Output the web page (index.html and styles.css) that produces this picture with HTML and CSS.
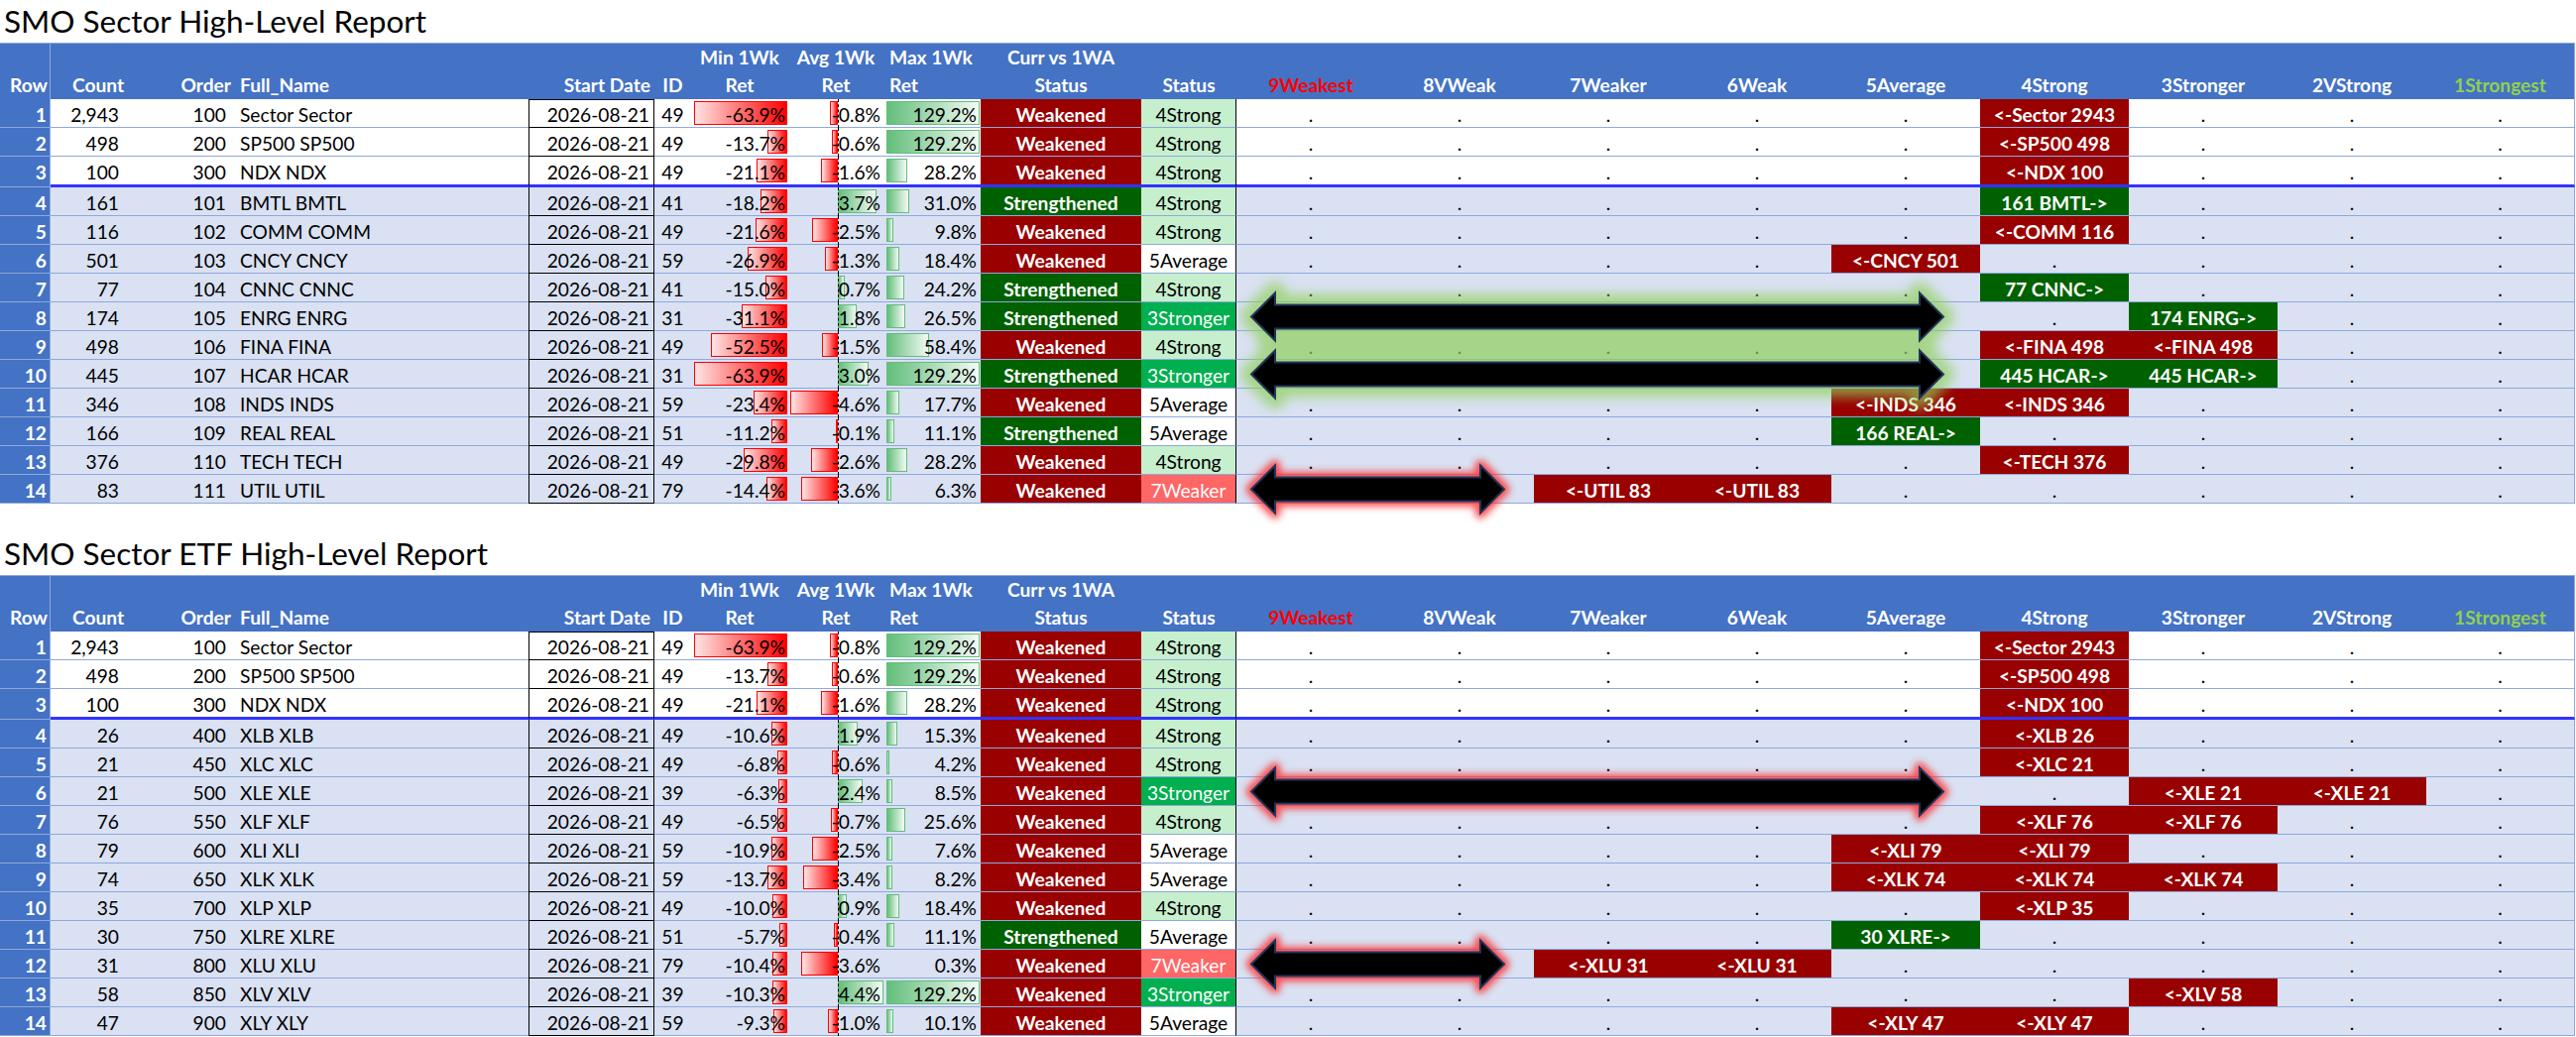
FILE: index.html
```html
<!DOCTYPE html>
<html lang="en">
<head>
<meta charset="utf-8">
<title>SMO Sector High-Level Report</title>
<link rel="stylesheet" href="styles.css">
</head>
<body>
<main class="page">

<section class="report">
<h1 class="title">SMO Sector High-Level Report</h1>
<div class="sheet">
<div class="row head">
<div class="c rn"><span>Row</span></div><div class="c cnt"><span>Count</span></div><div class="c ord"><span>Order</span></div><div class="c nm"><span>Full_Name</span></div><div class="c dt"><span>Start Date</span></div><div class="c id"><span>ID</span></div>
<div class="c mn"><span>Min 1Wk</span><span>Ret</span></div><div class="c av"><span>Avg 1Wk</span><span>Ret</span></div><div class="c mx"><span>Max 1Wk</span><span>Ret</span></div>
<div class="c s1"><span>Curr vs 1WA</span><span>Status</span></div><div class="c s2"><span>Status</span></div>
<div class="c g"><span class="weak9">9Weakest</span></div><div class="c g"><span>8VWeak</span></div><div class="c g"><span>7Weaker</span></div><div class="c g"><span>6Weak</span></div><div class="c g"><span>5Average</span></div><div class="c g"><span>4Strong</span></div><div class="c g"><span>3Stronger</span></div><div class="c g"><span>2VStrong</span></div><div class="c g"><span class="strong1">1Strongest</span></div>
</div>

<div class="row r first">
<div class="c rn">1</div><div class="c cnt">2,943</div><div class="c ord">100</div><div class="c nm">Sector Sector</div><div class="c dt">2026-08-21</div><div class="c id">49</div>
<div class="c mn"><i class="bar" style="width:94px"></i><span class="v">-63.9%</span></div>
<div class="c av"><i class="bar neg" style="width:8.3px"></i><span class="v">-0.8%</span></div>
<div class="c mx"><i class="bar pos" style="width:94px"></i><span class="v">129.2%</span></div>
<div class="c s1 wk">Weakened</div><div class="c s2 k4">4Strong</div>
<div class="c g">.</div><div class="c g">.</div><div class="c g">.</div><div class="c g">.</div><div class="c g">.</div><div class="c g fr">&lt;-Sector 2943</div><div class="c g">.</div><div class="c g">.</div><div class="c g">.</div>
</div>

<div class="row r">
<div class="c rn">2</div><div class="c cnt">498</div><div class="c ord">200</div><div class="c nm">SP500 SP500</div><div class="c dt">2026-08-21</div><div class="c id">49</div>
<div class="c mn"><i class="bar" style="width:20.2px"></i><span class="v">-13.7%</span></div>
<div class="c av"><i class="bar neg" style="width:6.2px"></i><span class="v">-0.6%</span></div>
<div class="c mx"><i class="bar pos" style="width:94px"></i><span class="v">129.2%</span></div>
<div class="c s1 wk">Weakened</div><div class="c s2 k4">4Strong</div>
<div class="c g">.</div><div class="c g">.</div><div class="c g">.</div><div class="c g">.</div><div class="c g">.</div><div class="c g fr">&lt;-SP500 498</div><div class="c g">.</div><div class="c g">.</div><div class="c g">.</div>
</div>

<div class="row r sep">
<div class="c rn">3</div><div class="c cnt">100</div><div class="c ord">300</div><div class="c nm">NDX NDX</div><div class="c dt">2026-08-21</div><div class="c id">49</div>
<div class="c mn"><i class="bar" style="width:31px"></i><span class="v">-21.1%</span></div>
<div class="c av"><i class="bar neg" style="width:16.6px"></i><span class="v">-1.6%</span></div>
<div class="c mx"><i class="bar pos" style="width:20.5px"></i><span class="v">28.2%</span></div>
<div class="c s1 wk">Weakened</div><div class="c s2 k4">4Strong</div>
<div class="c g">.</div><div class="c g">.</div><div class="c g">.</div><div class="c g">.</div><div class="c g">.</div><div class="c g fr">&lt;-NDX 100</div><div class="c g">.</div><div class="c g">.</div><div class="c g">.</div>
</div>

<div class="row r alt">
<div class="c rn">4</div><div class="c cnt">161</div><div class="c ord">101</div><div class="c nm">BMTL BMTL</div><div class="c dt">2026-08-21</div><div class="c id">41</div>
<div class="c mn"><i class="bar" style="width:26.8px"></i><span class="v">-18.2%</span></div>
<div class="c av"><i class="bar pos" style="width:38.5px"></i><span class="v">3.7%</span></div>
<div class="c mx"><i class="bar pos" style="width:22.6px"></i><span class="v">31.0%</span></div>
<div class="c s1 sg">Strengthened</div><div class="c s2 k4">4Strong</div>
<div class="c g">.</div><div class="c g">.</div><div class="c g">.</div><div class="c g">.</div><div class="c g">.</div><div class="c g fg">161 BMTL-&gt;</div><div class="c g">.</div><div class="c g">.</div><div class="c g">.</div>
</div>

<div class="row r alt">
<div class="c rn">5</div><div class="c cnt">116</div><div class="c ord">102</div><div class="c nm">COMM COMM</div><div class="c dt">2026-08-21</div><div class="c id">49</div>
<div class="c mn"><i class="bar" style="width:31.8px"></i><span class="v">-21.6%</span></div>
<div class="c av"><i class="bar neg" style="width:26px"></i><span class="v">-2.5%</span></div>
<div class="c mx"><i class="bar pos" style="width:7.1px"></i><span class="v">9.8%</span></div>
<div class="c s1 wk">Weakened</div><div class="c s2 k4">4Strong</div>
<div class="c g">.</div><div class="c g">.</div><div class="c g">.</div><div class="c g">.</div><div class="c g">.</div><div class="c g fr">&lt;-COMM 116</div><div class="c g">.</div><div class="c g">.</div><div class="c g">.</div>
</div>

<div class="row r alt">
<div class="c rn">6</div><div class="c cnt">501</div><div class="c ord">103</div><div class="c nm">CNCY CNCY</div><div class="c dt">2026-08-21</div><div class="c id">59</div>
<div class="c mn"><i class="bar" style="width:39.6px"></i><span class="v">-26.9%</span></div>
<div class="c av"><i class="bar neg" style="width:13.5px"></i><span class="v">-1.3%</span></div>
<div class="c mx"><i class="bar pos" style="width:13.4px"></i><span class="v">18.4%</span></div>
<div class="c s1 wk">Weakened</div><div class="c s2 k5">5Average</div>
<div class="c g">.</div><div class="c g">.</div><div class="c g">.</div><div class="c g">.</div><div class="c g fr">&lt;-CNCY 501</div><div class="c g">.</div><div class="c g">.</div><div class="c g">.</div><div class="c g">.</div>
</div>

<div class="row r alt">
<div class="c rn">7</div><div class="c cnt">77</div><div class="c ord">104</div><div class="c nm">CNNC CNNC</div><div class="c dt">2026-08-21</div><div class="c id">41</div>
<div class="c mn"><i class="bar" style="width:22.1px"></i><span class="v">-15.0%</span></div>
<div class="c av"><i class="bar pos" style="width:7.3px"></i><span class="v">0.7%</span></div>
<div class="c mx"><i class="bar pos" style="width:17.6px"></i><span class="v">24.2%</span></div>
<div class="c s1 sg">Strengthened</div><div class="c s2 k4">4Strong</div>
<div class="c g">.</div><div class="c g">.</div><div class="c g">.</div><div class="c g">.</div><div class="c g">.</div><div class="c g fg">77 CNNC-&gt;</div><div class="c g">.</div><div class="c g">.</div><div class="c g">.</div>
</div>

<div class="row r alt">
<div class="c rn">8</div><div class="c cnt">174</div><div class="c ord">105</div><div class="c nm">ENRG ENRG</div><div class="c dt">2026-08-21</div><div class="c id">31</div>
<div class="c mn"><i class="bar" style="width:45.7px"></i><span class="v">-31.1%</span></div>
<div class="c av"><i class="bar pos" style="width:18.7px"></i><span class="v">1.8%</span></div>
<div class="c mx"><i class="bar pos" style="width:19.3px"></i><span class="v">26.5%</span></div>
<div class="c s1 sg">Strengthened</div><div class="c s2 k3">3Stronger</div>
<div class="c g">.</div><div class="c g">.</div><div class="c g">.</div><div class="c g">.</div><div class="c g">.</div><div class="c g">.</div><div class="c g fg">174 ENRG-&gt;</div><div class="c g">.</div><div class="c g">.</div>
</div>

<div class="row r alt">
<div class="c rn">9</div><div class="c cnt">498</div><div class="c ord">106</div><div class="c nm">FINA FINA</div><div class="c dt">2026-08-21</div><div class="c id">49</div>
<div class="c mn"><i class="bar" style="width:77.2px"></i><span class="v">-52.5%</span></div>
<div class="c av"><i class="bar neg" style="width:15.6px"></i><span class="v">-1.5%</span></div>
<div class="c mx"><i class="bar pos" style="width:42.5px"></i><span class="v">58.4%</span></div>
<div class="c s1 wk">Weakened</div><div class="c s2 k4">4Strong</div>
<div class="c g">.</div><div class="c g">.</div><div class="c g">.</div><div class="c g">.</div><div class="c g">.</div><div class="c g fr">&lt;-FINA 498</div><div class="c g fr">&lt;-FINA 498</div><div class="c g">.</div><div class="c g">.</div>
</div>

<div class="row r alt">
<div class="c rn">10</div><div class="c cnt">445</div><div class="c ord">107</div><div class="c nm">HCAR HCAR</div><div class="c dt">2026-08-21</div><div class="c id">31</div>
<div class="c mn"><i class="bar" style="width:94px"></i><span class="v">-63.9%</span></div>
<div class="c av"><i class="bar pos" style="width:31.2px"></i><span class="v">3.0%</span></div>
<div class="c mx"><i class="bar pos" style="width:94px"></i><span class="v">129.2%</span></div>
<div class="c s1 sg">Strengthened</div><div class="c s2 k3">3Stronger</div>
<div class="c g">.</div><div class="c g">.</div><div class="c g">.</div><div class="c g">.</div><div class="c g">.</div><div class="c g fg">445 HCAR-&gt;</div><div class="c g fg">445 HCAR-&gt;</div><div class="c g">.</div><div class="c g">.</div>
</div>

<div class="row r alt">
<div class="c rn">11</div><div class="c cnt">346</div><div class="c ord">108</div><div class="c nm">INDS INDS</div><div class="c dt">2026-08-21</div><div class="c id">59</div>
<div class="c mn"><i class="bar" style="width:34.4px"></i><span class="v">-23.4%</span></div>
<div class="c av"><i class="bar neg" style="width:47.8px"></i><span class="v">-4.6%</span></div>
<div class="c mx"><i class="bar pos" style="width:12.9px"></i><span class="v">17.7%</span></div>
<div class="c s1 wk">Weakened</div><div class="c s2 k5">5Average</div>
<div class="c g">.</div><div class="c g">.</div><div class="c g">.</div><div class="c g">.</div><div class="c g fr">&lt;-INDS 346</div><div class="c g fr">&lt;-INDS 346</div><div class="c g">.</div><div class="c g">.</div><div class="c g">.</div>
</div>

<div class="row r alt">
<div class="c rn">12</div><div class="c cnt">166</div><div class="c ord">109</div><div class="c nm">REAL REAL</div><div class="c dt">2026-08-21</div><div class="c id">51</div>
<div class="c mn"><i class="bar" style="width:16.5px"></i><span class="v">-11.2%</span></div>
<div class="c av"><i class="bar neg" style="width:1.5px"></i><span class="v">-0.1%</span></div>
<div class="c mx"><i class="bar pos" style="width:8.1px"></i><span class="v">11.1%</span></div>
<div class="c s1 sg">Strengthened</div><div class="c s2 k5">5Average</div>
<div class="c g">.</div><div class="c g">.</div><div class="c g">.</div><div class="c g">.</div><div class="c g fg">166 REAL-&gt;</div><div class="c g">.</div><div class="c g">.</div><div class="c g">.</div><div class="c g">.</div>
</div>

<div class="row r alt">
<div class="c rn">13</div><div class="c cnt">376</div><div class="c ord">110</div><div class="c nm">TECH TECH</div><div class="c dt">2026-08-21</div><div class="c id">49</div>
<div class="c mn"><i class="bar" style="width:43.8px"></i><span class="v">-29.8%</span></div>
<div class="c av"><i class="bar neg" style="width:27px"></i><span class="v">-2.6%</span></div>
<div class="c mx"><i class="bar pos" style="width:20.5px"></i><span class="v">28.2%</span></div>
<div class="c s1 wk">Weakened</div><div class="c s2 k4">4Strong</div>
<div class="c g">.</div><div class="c g">.</div><div class="c g">.</div><div class="c g">.</div><div class="c g">.</div><div class="c g fr">&lt;-TECH 376</div><div class="c g">.</div><div class="c g">.</div><div class="c g">.</div>
</div>

<div class="row r alt">
<div class="c rn">14</div><div class="c cnt">83</div><div class="c ord">111</div><div class="c nm">UTIL UTIL</div><div class="c dt">2026-08-21</div><div class="c id">79</div>
<div class="c mn"><i class="bar" style="width:21.2px"></i><span class="v">-14.4%</span></div>
<div class="c av"><i class="bar neg" style="width:37.4px"></i><span class="v">-3.6%</span></div>
<div class="c mx"><i class="bar pos" style="width:4.6px"></i><span class="v">6.3%</span></div>
<div class="c s1 wk">Weakened</div><div class="c s2 k7">7Weaker</div>
<div class="c g">.</div><div class="c g">.</div><div class="c g fr">&lt;-UTIL 83</div><div class="c g fr">&lt;-UTIL 83</div><div class="c g">.</div><div class="c g">.</div><div class="c g">.</div><div class="c g">.</div><div class="c g">.</div>
</div>

<svg class="overlay" width="2597" height="465" viewBox="0 0 2597 465" aria-hidden="true">
<defs>
<filter id="blurG1" filterUnits="userSpaceOnUse" x="1249" y="180" width="800" height="260">
<feGaussianBlur stdDeviation="6"/>
</filter>
<filter id="blurR1" filterUnits="userSpaceOnUse" x="1249" y="380" width="360" height="140">
<feGaussianBlur stdDeviation="3.5"/>
</filter>
</defs>
<g class="glow green" filter="url(#blurG1)">
<path d="M1262,276.5 L1286,252.5 L1286,264.5 L1936,264.5 L1936,252.5 L1960,276.5 L1936,300.5 L1936,288.5 L1286,288.5 L1286,300.5 Z"/>
<path d="M1262,334.5 L1286,310.5 L1286,322.5 L1936,322.5 L1936,310.5 L1960,334.5 L1936,358.5 L1936,346.5 L1286,346.5 L1286,358.5 Z"/>
<rect x="1280" y="286" width="662" height="38"/>
</g>
<g class="arrow">
<path d="M1262,276.5 L1286,252.5 L1286,264.5 L1936,264.5 L1936,252.5 L1960,276.5 L1936,300.5 L1936,288.5 L1286,288.5 L1286,300.5 Z"/>
<path d="M1262,334.5 L1286,310.5 L1286,322.5 L1936,322.5 L1936,310.5 L1960,334.5 L1936,358.5 L1936,346.5 L1286,346.5 L1286,358.5 Z"/>
</g>
<g class="glow red" filter="url(#blurR1)">
<path d="M1262,450.5 L1286,426.5 L1286,438.5 L1493,438.5 L1493,426.5 L1517,450.5 L1493,474.5 L1493,462.5 L1286,462.5 L1286,474.5 Z"/>
</g>
<g class="arrow">
<path d="M1262,450.5 L1286,426.5 L1286,438.5 L1493,438.5 L1493,426.5 L1517,450.5 L1493,474.5 L1493,462.5 L1286,462.5 L1286,474.5 Z"/>
</g>
</svg>
</div>
</section>

<section class="report">
<h1 class="title">SMO Sector ETF High-Level Report</h1>
<div class="sheet">
<div class="row head">
<div class="c rn"><span>Row</span></div><div class="c cnt"><span>Count</span></div><div class="c ord"><span>Order</span></div><div class="c nm"><span>Full_Name</span></div><div class="c dt"><span>Start Date</span></div><div class="c id"><span>ID</span></div>
<div class="c mn"><span>Min 1Wk</span><span>Ret</span></div><div class="c av"><span>Avg 1Wk</span><span>Ret</span></div><div class="c mx"><span>Max 1Wk</span><span>Ret</span></div>
<div class="c s1"><span>Curr vs 1WA</span><span>Status</span></div><div class="c s2"><span>Status</span></div>
<div class="c g"><span class="weak9">9Weakest</span></div><div class="c g"><span>8VWeak</span></div><div class="c g"><span>7Weaker</span></div><div class="c g"><span>6Weak</span></div><div class="c g"><span>5Average</span></div><div class="c g"><span>4Strong</span></div><div class="c g"><span>3Stronger</span></div><div class="c g"><span>2VStrong</span></div><div class="c g"><span class="strong1">1Strongest</span></div>
</div>

<div class="row r first">
<div class="c rn">1</div><div class="c cnt">2,943</div><div class="c ord">100</div><div class="c nm">Sector Sector</div><div class="c dt">2026-08-21</div><div class="c id">49</div>
<div class="c mn"><i class="bar" style="width:94px"></i><span class="v">-63.9%</span></div>
<div class="c av"><i class="bar neg" style="width:8.3px"></i><span class="v">-0.8%</span></div>
<div class="c mx"><i class="bar pos" style="width:94px"></i><span class="v">129.2%</span></div>
<div class="c s1 wk">Weakened</div><div class="c s2 k4">4Strong</div>
<div class="c g">.</div><div class="c g">.</div><div class="c g">.</div><div class="c g">.</div><div class="c g">.</div><div class="c g fr">&lt;-Sector 2943</div><div class="c g">.</div><div class="c g">.</div><div class="c g">.</div>
</div>

<div class="row r">
<div class="c rn">2</div><div class="c cnt">498</div><div class="c ord">200</div><div class="c nm">SP500 SP500</div><div class="c dt">2026-08-21</div><div class="c id">49</div>
<div class="c mn"><i class="bar" style="width:20.2px"></i><span class="v">-13.7%</span></div>
<div class="c av"><i class="bar neg" style="width:6.2px"></i><span class="v">-0.6%</span></div>
<div class="c mx"><i class="bar pos" style="width:94px"></i><span class="v">129.2%</span></div>
<div class="c s1 wk">Weakened</div><div class="c s2 k4">4Strong</div>
<div class="c g">.</div><div class="c g">.</div><div class="c g">.</div><div class="c g">.</div><div class="c g">.</div><div class="c g fr">&lt;-SP500 498</div><div class="c g">.</div><div class="c g">.</div><div class="c g">.</div>
</div>

<div class="row r sep">
<div class="c rn">3</div><div class="c cnt">100</div><div class="c ord">300</div><div class="c nm">NDX NDX</div><div class="c dt">2026-08-21</div><div class="c id">49</div>
<div class="c mn"><i class="bar" style="width:31px"></i><span class="v">-21.1%</span></div>
<div class="c av"><i class="bar neg" style="width:16.6px"></i><span class="v">-1.6%</span></div>
<div class="c mx"><i class="bar pos" style="width:20.5px"></i><span class="v">28.2%</span></div>
<div class="c s1 wk">Weakened</div><div class="c s2 k4">4Strong</div>
<div class="c g">.</div><div class="c g">.</div><div class="c g">.</div><div class="c g">.</div><div class="c g">.</div><div class="c g fr">&lt;-NDX 100</div><div class="c g">.</div><div class="c g">.</div><div class="c g">.</div>
</div>

<div class="row r alt">
<div class="c rn">4</div><div class="c cnt">26</div><div class="c ord">400</div><div class="c nm">XLB XLB</div><div class="c dt">2026-08-21</div><div class="c id">49</div>
<div class="c mn"><i class="bar" style="width:15.6px"></i><span class="v">-10.6%</span></div>
<div class="c av"><i class="bar pos" style="width:19.8px"></i><span class="v">1.9%</span></div>
<div class="c mx"><i class="bar pos" style="width:11.1px"></i><span class="v">15.3%</span></div>
<div class="c s1 wk">Weakened</div><div class="c s2 k4">4Strong</div>
<div class="c g">.</div><div class="c g">.</div><div class="c g">.</div><div class="c g">.</div><div class="c g">.</div><div class="c g fr">&lt;-XLB 26</div><div class="c g">.</div><div class="c g">.</div><div class="c g">.</div>
</div>

<div class="row r alt">
<div class="c rn">5</div><div class="c cnt">21</div><div class="c ord">450</div><div class="c nm">XLC XLC</div><div class="c dt">2026-08-21</div><div class="c id">49</div>
<div class="c mn"><i class="bar" style="width:10px"></i><span class="v">-6.8%</span></div>
<div class="c av"><i class="bar neg" style="width:6.2px"></i><span class="v">-0.6%</span></div>
<div class="c mx"><i class="bar pos" style="width:3.1px"></i><span class="v">4.2%</span></div>
<div class="c s1 wk">Weakened</div><div class="c s2 k4">4Strong</div>
<div class="c g">.</div><div class="c g">.</div><div class="c g">.</div><div class="c g">.</div><div class="c g">.</div><div class="c g fr">&lt;-XLC 21</div><div class="c g">.</div><div class="c g">.</div><div class="c g">.</div>
</div>

<div class="row r alt">
<div class="c rn">6</div><div class="c cnt">21</div><div class="c ord">500</div><div class="c nm">XLE XLE</div><div class="c dt">2026-08-21</div><div class="c id">39</div>
<div class="c mn"><i class="bar" style="width:9.3px"></i><span class="v">-6.3%</span></div>
<div class="c av"><i class="bar pos" style="width:25px"></i><span class="v">2.4%</span></div>
<div class="c mx"><i class="bar pos" style="width:6.2px"></i><span class="v">8.5%</span></div>
<div class="c s1 wk">Weakened</div><div class="c s2 k3">3Stronger</div>
<div class="c g">.</div><div class="c g">.</div><div class="c g">.</div><div class="c g">.</div><div class="c g">.</div><div class="c g">.</div><div class="c g fr">&lt;-XLE 21</div><div class="c g fr">&lt;-XLE 21</div><div class="c g">.</div>
</div>

<div class="row r alt">
<div class="c rn">7</div><div class="c cnt">76</div><div class="c ord">550</div><div class="c nm">XLF XLF</div><div class="c dt">2026-08-21</div><div class="c id">49</div>
<div class="c mn"><i class="bar" style="width:9.6px"></i><span class="v">-6.5%</span></div>
<div class="c av"><i class="bar neg" style="width:7.3px"></i><span class="v">-0.7%</span></div>
<div class="c mx"><i class="bar pos" style="width:18.6px"></i><span class="v">25.6%</span></div>
<div class="c s1 wk">Weakened</div><div class="c s2 k4">4Strong</div>
<div class="c g">.</div><div class="c g">.</div><div class="c g">.</div><div class="c g">.</div><div class="c g">.</div><div class="c g fr">&lt;-XLF 76</div><div class="c g fr">&lt;-XLF 76</div><div class="c g">.</div><div class="c g">.</div>
</div>

<div class="row r alt">
<div class="c rn">8</div><div class="c cnt">79</div><div class="c ord">600</div><div class="c nm">XLI XLI</div><div class="c dt">2026-08-21</div><div class="c id">59</div>
<div class="c mn"><i class="bar" style="width:16px"></i><span class="v">-10.9%</span></div>
<div class="c av"><i class="bar neg" style="width:26px"></i><span class="v">-2.5%</span></div>
<div class="c mx"><i class="bar pos" style="width:5.5px"></i><span class="v">7.6%</span></div>
<div class="c s1 wk">Weakened</div><div class="c s2 k5">5Average</div>
<div class="c g">.</div><div class="c g">.</div><div class="c g">.</div><div class="c g">.</div><div class="c g fr">&lt;-XLI 79</div><div class="c g fr">&lt;-XLI 79</div><div class="c g">.</div><div class="c g">.</div><div class="c g">.</div>
</div>

<div class="row r alt">
<div class="c rn">9</div><div class="c cnt">74</div><div class="c ord">650</div><div class="c nm">XLK XLK</div><div class="c dt">2026-08-21</div><div class="c id">59</div>
<div class="c mn"><i class="bar" style="width:20.2px"></i><span class="v">-13.7%</span></div>
<div class="c av"><i class="bar neg" style="width:35.4px"></i><span class="v">-3.4%</span></div>
<div class="c mx"><i class="bar pos" style="width:6px"></i><span class="v">8.2%</span></div>
<div class="c s1 wk">Weakened</div><div class="c s2 k5">5Average</div>
<div class="c g">.</div><div class="c g">.</div><div class="c g">.</div><div class="c g">.</div><div class="c g fr">&lt;-XLK 74</div><div class="c g fr">&lt;-XLK 74</div><div class="c g fr">&lt;-XLK 74</div><div class="c g">.</div><div class="c g">.</div>
</div>

<div class="row r alt">
<div class="c rn">10</div><div class="c cnt">35</div><div class="c ord">700</div><div class="c nm">XLP XLP</div><div class="c dt">2026-08-21</div><div class="c id">49</div>
<div class="c mn"><i class="bar" style="width:14.7px"></i><span class="v">-10.0%</span></div>
<div class="c av"><i class="bar pos" style="width:9.4px"></i><span class="v">0.9%</span></div>
<div class="c mx"><i class="bar pos" style="width:13.4px"></i><span class="v">18.4%</span></div>
<div class="c s1 wk">Weakened</div><div class="c s2 k4">4Strong</div>
<div class="c g">.</div><div class="c g">.</div><div class="c g">.</div><div class="c g">.</div><div class="c g">.</div><div class="c g fr">&lt;-XLP 35</div><div class="c g">.</div><div class="c g">.</div><div class="c g">.</div>
</div>

<div class="row r alt">
<div class="c rn">11</div><div class="c cnt">30</div><div class="c ord">750</div><div class="c nm">XLRE XLRE</div><div class="c dt">2026-08-21</div><div class="c id">51</div>
<div class="c mn"><i class="bar" style="width:8.4px"></i><span class="v">-5.7%</span></div>
<div class="c av"><i class="bar neg" style="width:4.2px"></i><span class="v">-0.4%</span></div>
<div class="c mx"><i class="bar pos" style="width:8.1px"></i><span class="v">11.1%</span></div>
<div class="c s1 sg">Strengthened</div><div class="c s2 k5">5Average</div>
<div class="c g">.</div><div class="c g">.</div><div class="c g">.</div><div class="c g">.</div><div class="c g fg">30 XLRE-&gt;</div><div class="c g">.</div><div class="c g">.</div><div class="c g">.</div><div class="c g">.</div>
</div>

<div class="row r alt">
<div class="c rn">12</div><div class="c cnt">31</div><div class="c ord">800</div><div class="c nm">XLU XLU</div><div class="c dt">2026-08-21</div><div class="c id">79</div>
<div class="c mn"><i class="bar" style="width:15.3px"></i><span class="v">-10.4%</span></div>
<div class="c av"><i class="bar neg" style="width:37.4px"></i><span class="v">-3.6%</span></div>
<div class="c mx"><span class="v">0.3%</span></div>
<div class="c s1 wk">Weakened</div><div class="c s2 k7">7Weaker</div>
<div class="c g">.</div><div class="c g">.</div><div class="c g fr">&lt;-XLU 31</div><div class="c g fr">&lt;-XLU 31</div><div class="c g">.</div><div class="c g">.</div><div class="c g">.</div><div class="c g">.</div><div class="c g">.</div>
</div>

<div class="row r alt">
<div class="c rn">13</div><div class="c cnt">58</div><div class="c ord">850</div><div class="c nm">XLV XLV</div><div class="c dt">2026-08-21</div><div class="c id">39</div>
<div class="c mn"><i class="bar" style="width:15.2px"></i><span class="v">-10.3%</span></div>
<div class="c av"><i class="bar pos" style="width:45.8px"></i><span class="v">4.4%</span></div>
<div class="c mx"><i class="bar pos" style="width:94px"></i><span class="v">129.2%</span></div>
<div class="c s1 wk">Weakened</div><div class="c s2 k3">3Stronger</div>
<div class="c g">.</div><div class="c g">.</div><div class="c g">.</div><div class="c g">.</div><div class="c g">.</div><div class="c g">.</div><div class="c g fr">&lt;-XLV 58</div><div class="c g">.</div><div class="c g">.</div>
</div>

<div class="row r alt">
<div class="c rn">14</div><div class="c cnt">47</div><div class="c ord">900</div><div class="c nm">XLY XLY</div><div class="c dt">2026-08-21</div><div class="c id">59</div>
<div class="c mn"><i class="bar" style="width:13.7px"></i><span class="v">-9.3%</span></div>
<div class="c av"><i class="bar neg" style="width:10.4px"></i><span class="v">-1.0%</span></div>
<div class="c mx"><i class="bar pos" style="width:7.3px"></i><span class="v">10.1%</span></div>
<div class="c s1 wk">Weakened</div><div class="c s2 k5">5Average</div>
<div class="c g">.</div><div class="c g">.</div><div class="c g">.</div><div class="c g">.</div><div class="c g fr">&lt;-XLY 47</div><div class="c g fr">&lt;-XLY 47</div><div class="c g">.</div><div class="c g">.</div><div class="c g">.</div>
</div>

<svg class="overlay" width="2597" height="465" viewBox="0 0 2597 465" aria-hidden="true">
<defs>
<filter id="blurR2" filterUnits="userSpaceOnUse" x="1249" y="150" width="770" height="300">
<feGaussianBlur stdDeviation="3.5"/>
</filter>
</defs>
<g class="glow red" filter="url(#blurR2)">
<path d="M1262,218.5 L1286,194.5 L1286,206.5 L1936,206.5 L1936,194.5 L1960,218.5 L1936,242.5 L1936,230.5 L1286,230.5 L1286,242.5 Z"/>
<path d="M1262,392.5 L1286,368.5 L1286,380.5 L1493,380.5 L1493,368.5 L1517,392.5 L1493,416.5 L1493,404.5 L1286,404.5 L1286,416.5 Z"/>
</g>
<g class="arrow">
<path d="M1262,218.5 L1286,194.5 L1286,206.5 L1936,206.5 L1936,194.5 L1960,218.5 L1936,242.5 L1936,230.5 L1286,230.5 L1286,242.5 Z"/>
<path d="M1262,392.5 L1286,368.5 L1286,380.5 L1493,380.5 L1493,368.5 L1517,392.5 L1493,416.5 L1493,404.5 L1286,404.5 L1286,416.5 Z"/>
</g>
</svg>
</div>
</section>

</main>
</body>
</html>
```

FILE: styles.css
```css
* {
  box-sizing: border-box;
}

body {
  margin: 0;
  background: #ffffff;
  color: #000000;
  font-family: Lato, "Open Sans", sans-serif;
  font-size: 19.2px;
}

.page {
  display: flex;
  flex-direction: column;
  gap: 29px;
  width: 2598px;
}

.title {
  margin: 0;
  height: 43px;
  padding-left: 4px;
  font-size: 31.5px;
  font-weight: 400;
  line-height: 43px;
  white-space: nowrap;
}

.sheet {
  position: relative;
  width: 2597px;
}

.row {
  display: grid;
  grid-template-columns: 51px 96px 88px 298px 127px 37px 98px 96px 98px 162px 96px repeat(9, 150px);
  background: #ffffff;
}

.row.alt {
  background: #d9e1f2;
}

.c {
  height: 29px;
  padding-top: 4px;
  line-height: 24px;
  border-bottom: 1px solid #8ea9db;
  white-space: nowrap;
}

/* header */
.head {
  background: #4472c4;
  color: #ffffff;
  font-weight: 700;
  border-top: 1px solid #8ea9db;
}

.head .c {
  display: flex;
  flex-direction: column;
  justify-content: flex-end;
  height: 56px;
  padding-top: 0;
  line-height: 28px;
  border: 0;
}

.head .c.rn {
  border-right: 1px solid #8ea9db;
  padding-right: 2px;
}

.head .c:last-child {
  border-right: 1px solid #8ea9db;
}

.weak9 {
  color: #ff0000;
}

.strong1 {
  color: #92d050;
}

/* columns */
.rn {
  background: #4472c4;
  color: #ffffff;
  font-weight: 700;
  text-align: right;
  padding-right: 3px;
  border-right: 1px solid #8ea9db;
}

.cnt {
  text-align: right;
  padding-right: 27px;
}

.head .cnt {
  text-align: center;
  padding-right: 0;
}

.ord {
  text-align: right;
  padding-right: 7px;
}

.head .ord {
  padding-right: 2px;
}

.nm {
  padding-left: 7px;
}

.dt {
  text-align: right;
  padding-right: 4px;
  border-left: 1px solid #000000;
  border-right: 1px solid #000000;
  border-bottom-color: #000000;
}

.first .dt {
  box-shadow: inset 0 1px 0 #000000;
}

.id {
  text-align: center;
}

.mn,
.av,
.mx {
  position: relative;
  text-align: right;
  padding-right: 3px;
}

.mx {
  padding-right: 4px;
}

.head .mn,
.head .av {
  text-align: center;
  padding-right: 0;
}

.head .mx {
  text-align: left;
  padding-left: 6px;
}

.v {
  position: relative;
  z-index: 1;
}

.bar {
  position: absolute;
  top: 2px;
  bottom: 2px;
  border: 1px solid #ff0000;
  background: linear-gradient(to right, #ffe4e4, #ff0000);
}

.bar.pos {
  border-color: #63be7b;
  background: linear-gradient(to right, #63be7b, #f3faf5);
}

.mn .bar {
  right: 1px;
}

.av .bar.neg {
  right: 46px;
}

.av .bar.pos {
  left: 50px;
}

.mx .bar {
  left: 3px;
}

.r .av::before {
  content: "";
  position: absolute;
  left: 50px;
  top: 0;
  bottom: -1px;
  border-left: 1px dashed #000000;
  z-index: 2;
}

.s1 {
  text-align: center;
  color: #ffffff;
  font-weight: 700;
}

.wk {
  background: #990000;
}

.sg {
  background: #006100;
}

.s2 {
  text-align: center;
  border-right: 1px solid #000000;
}

.k4 {
  background: #c6efce;
}

.k5 {
  background: #ffffff;
}

.k3 {
  background: #00b050;
  color: #ffffff;
}

.k7 {
  background: #ff6666;
  color: #ffffff;
}

.g {
  text-align: center;
}

.g:last-child {
  border-right: 1px solid #8ea9db;
}

.fr {
  background: #990000;
  color: #ffffff;
  font-weight: 700;
}

.fg {
  background: #006100;
  color: #ffffff;
  font-weight: 700;
}

/* separator after the three index rows */
.sep .c {
  height: 31px;
  border-bottom: 3px solid #3333ff;
}

.sep .c.rn {
  border-bottom: 1px solid #8ea9db;
}

/* arrows overlay */
.overlay {
  position: absolute;
  left: 0;
  top: 0;
  overflow: visible;
  pointer-events: none;
}

.glow path,
.glow rect {
  stroke-linejoin: round;
}

.glow.green {
  opacity: 0.68;
}

.glow.green path,
.glow.green rect {
  fill: #8fd05a;
  stroke: #8fd05a;
  stroke-width: 22;
}

.glow.red {
  opacity: 0.8;
}

.glow.red path {
  fill: #ff2a2a;
  stroke: #ff2a2a;
  stroke-width: 11;
}

.arrow path {
  fill: #000000;
  stroke: #22355a;
  stroke-width: 2;
  stroke-linejoin: miter;
}
```
